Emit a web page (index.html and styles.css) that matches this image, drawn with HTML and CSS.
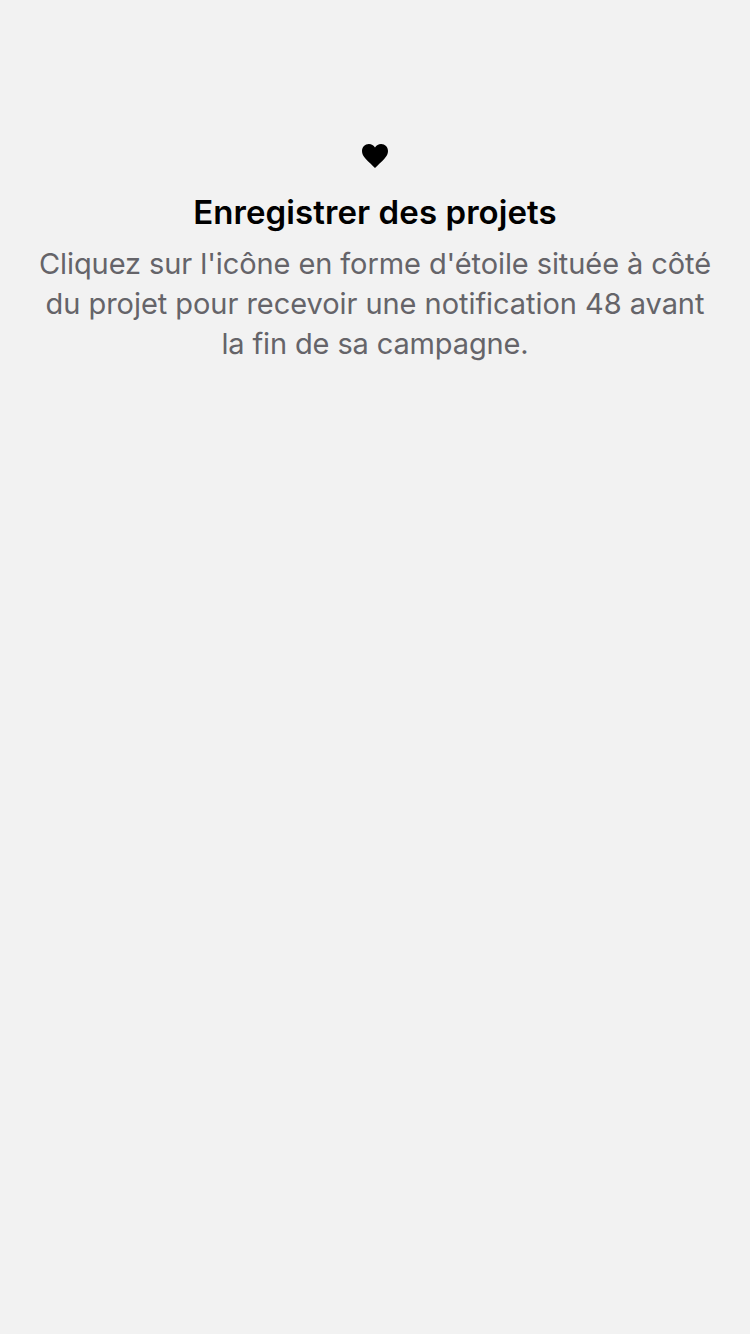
FILE: index.html
```html
<!DOCTYPE html>
<html lang="fr">
<head>
<meta charset="utf-8">
<title>Enregistrer des projets</title>
<link rel="stylesheet" href="styles.css">
</head>
<body>
<main class="empty-state">
  <svg class="heart" viewBox="0 0 26 24" aria-hidden="true"><path d="M13 24C10.500 21.300 6.500 17.900 3.600 14.700C1.200 12.100 0 9.900 0 7.100C0 3.100 3 0 6.900 0C9.500 0 11.700 1.200 13 3.500C14.300 1.200 16.500 0 19.100 0C23 0 26 3.100 26 7.100C26 9.900 24.800 12.100 22.400 14.700C19.500 17.900 15.500 21.300 13 24Z"/></svg>
  <h1 class="title">Enregistrer des projets</h1>
  <p class="message"><span class="line line-first">Cliquez sur l'icône en forme d'étoile située à côté</span> <span class="line line-second">du projet pour recevoir une notification 48 avant</span> <span class="line line-third">la fin de sa campagne.</span></p>
</main>
</body>
</html>
```

FILE: styles.css
```css
body {
  margin: 0;
  background: #f2f2f2;
  font-family: Inter, "Liberation Sans", sans-serif;
}

.empty-state {
  display: flex;
  flex-direction: column;
  align-items: center;
  padding-top: 144px;
  text-align: center;
}

.heart {
  width: 26px;
  height: 24px;
  fill: #000;
}

.title {
  margin: 24px 0 0;
  font-size: 33px;
  font-weight: 600;
  letter-spacing: 0.08px;
  line-height: 40px;
  white-space: nowrap;
  color: #000;
}

.message {
  margin: 12px 0 0;
  font-size: 29px;
  letter-spacing: -0.09px;
  line-height: 40px;
  color: #656469;
}

.line {
  display: block;
  white-space: nowrap;
}

.line-second {
  letter-spacing: -0.05px;
}

.line-third {
  letter-spacing: -0.14px;
}
```
